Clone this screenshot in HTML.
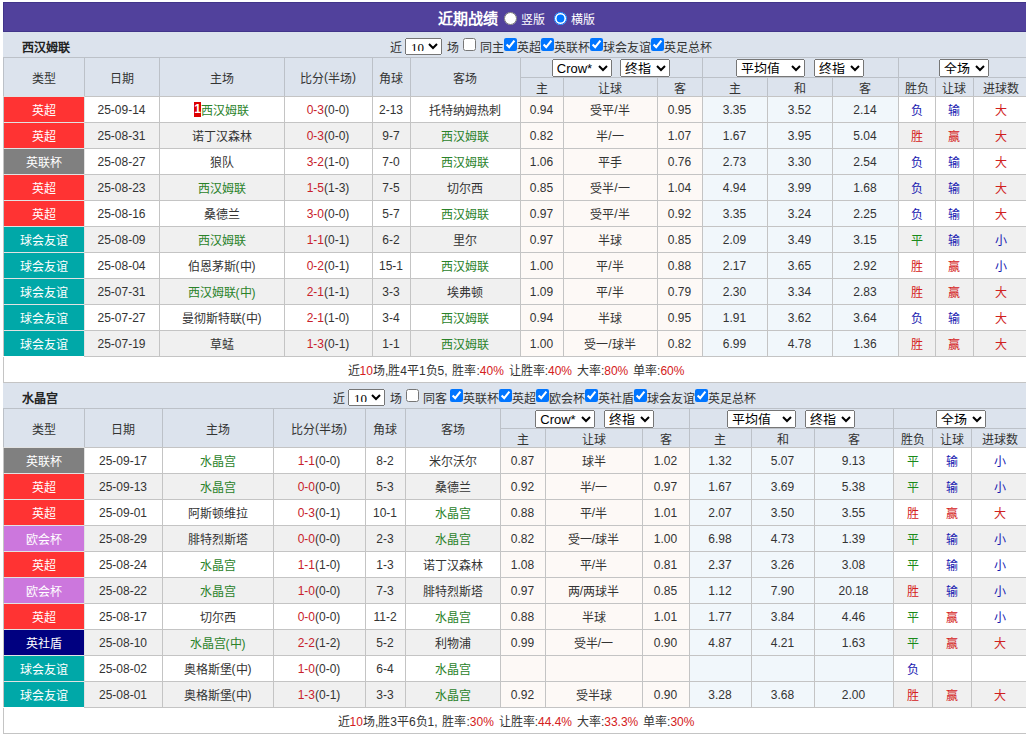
<!DOCTYPE html>
<html lang="zh-CN"><head><meta charset="utf-8">
<style>
html,body{margin:0;padding:0;background:#fff;overflow:hidden;width:1026px;height:737px;}
body{font-family:"Liberation Sans",sans-serif;font-size:12px;color:#333;position:relative;}
.c,.bar,.tname,.ttl,.flt{position:absolute;box-sizing:border-box;}
.c{border-left:1px solid #c4c4c4;border-top:1px solid #c4c4c4;display:flex;align-items:center;justify-content:center;white-space:nowrap;padding:0 1px 0 0;}
.hd{color:#333;border-color:#bcc1c8;}
i{font-style:normal;position:relative;top:0px;}
.tname{font-weight:bold;color:#222;font-size:12px;line-height:14px;}
.g{color:#2a822a;}
.sc{color:#c8202a;}
.r{color:#d42020;}
.sum>span{word-spacing:1.5px;}
.rk{background:#dd0000;color:#fff;font-weight:bold;display:inline-block;width:7px;height:15px;line-height:15px;text-align:center;font-size:12px;}
.flt{white-space:nowrap;color:#333;line-height:20px;height:20px;}
.flt select{font-family:"Liberation Serif",serif;font-size:13px;height:17px;width:37px;margin:0 5px 0 3.5px;vertical-align:top;padding:0 0 3px 1px;}
.flt input{vertical-align:top;margin:0;width:13px;height:13px;}
.flt input.uc{margin:0 4px 0 3.5px;} .flt input.sp{margin-left:3.5px;}
.gs select{font-family:"Liberation Sans",sans-serif;font-size:13px;height:18px;vertical-align:top;padding-bottom:2px;}
.s1{width:60px;margin-right:8.5px;} .s2{width:50px;} .s3{width:69px;margin-right:8.5px;} .s4{width:50px;}
.tt{position:absolute;font-weight:bold;font-size:15px;line-height:17px;color:#fff;}
.tv{position:absolute;color:#fff;font-size:12px;line-height:14px;}
body>input{position:absolute;margin:0;width:13px;height:13px;}
.ttl{left:3px;top:2px;width:1026px;height:30px;background:#51419c;border:1px solid #41358a;border-right:0;}
</style></head><body>
<div class="ttl"></div><span class="tt" style="left:438px;top:10px">近期战绩</span><input type="radio" name="v" style="left:504px;top:12px"><span class="tv" style="left:521px;top:13px">竖版</span><input type="radio" name="v" checked style="left:554px;top:12px"><span class="tv" style="left:571px;top:13px">横版</span>
<div class="bar" style="left:3px;top:32px;width:1026px;height:25px;background:#dce3ed;"></div>
<div class="tname" style="left:22px;top:41px">西汉姆联</div>
<div class="flt" style="left:389.5px;top:38px">近<select><option>10</option></select>场<input type="checkbox" class="uc">同主<input type="checkbox" checked>英超<input type="checkbox" checked>英联杯<input type="checkbox" checked>球会友谊<input type="checkbox" checked>英足总杯</div>
<div class="c hd" style="left:3px;top:57px;width:81px;height:39px;background:#dce3ed;"><i>类型</i></div>
<div class="c hd" style="left:84px;top:57px;width:75px;height:39px;background:#dce3ed;"><i>日期</i></div>
<div class="c hd" style="left:159px;top:57px;width:125px;height:39px;background:#dce3ed;"><i>主场</i></div>
<div class="c hd" style="left:284px;top:57px;width:88px;height:39px;background:#dce3ed;"><i>比分</i>(<i>半场</i>)</div>
<div class="c hd" style="left:372px;top:57px;width:38px;height:39px;background:#dce3ed;"><i>角球</i></div>
<div class="c hd" style="left:410px;top:57px;width:110px;height:39px;background:#dce3ed;"><i>客场</i></div>
<div class="c hd gs" style="left:520px;top:57px;width:182px;height:20px;background:#dce3ed;"><span><select class="s1"><option>Crow*</option></select><select class="s2"><option>终指</option></select></span></div>
<div class="c hd gs" style="left:702px;top:57px;width:196px;height:20px;background:#dce3ed;"><span><select class="s3"><option>平均值</option></select><select class="s2"><option>终指</option></select></span></div>
<div class="c hd gs" style="left:898px;top:57px;width:131px;height:20px;background:#dce3ed;"><span><select class="s4"><option>全场</option></select></span></div>
<div class="c hd sub" style="left:520px;top:77px;width:43px;height:19px;background:#dce3ed;"><i>主</i></div>
<div class="c hd sub" style="left:563px;top:77px;width:94px;height:19px;background:#dce3ed;"><i>让球</i></div>
<div class="c hd sub" style="left:657px;top:77px;width:45px;height:19px;background:#dce3ed;"><i>客</i></div>
<div class="c hd sub" style="left:702px;top:77px;width:65px;height:19px;background:#dce3ed;"><i>主</i></div>
<div class="c hd sub" style="left:767px;top:77px;width:65px;height:19px;background:#dce3ed;"><i>和</i></div>
<div class="c hd sub" style="left:832px;top:77px;width:66px;height:19px;background:#dce3ed;"><i>客</i></div>
<div class="c hd sub" style="left:898px;top:77px;width:37px;height:19px;background:#dce3ed;"><i>胜负</i></div>
<div class="c hd sub" style="left:935px;top:77px;width:38px;height:19px;background:#dce3ed;"><i>让球</i></div>
<div class="c hd sub" style="left:973px;top:77px;width:56px;height:19px;background:#dce3ed;"><i>进球数</i></div>
<div class="c" style="left:3px;top:96px;width:81px;height:26px;background:#ff3333;color:#fff;border-top-color:#e2e2e2;"><i>英超</i></div>
<div class="c" style="left:84px;top:96px;width:75px;height:26px;background:#ffffff;border-left-color:#e2e2e2;">25-09-14</div>
<div class="c" style="left:159px;top:96px;width:125px;height:26px;background:#ffffff;"><span class="rk">1</span><span class="g"><i>西汉姆联</i></span></div>
<div class="c" style="left:284px;top:96px;width:88px;height:26px;background:#ffffff;"><span class="sc">0-3</span>(0-0)</div>
<div class="c" style="left:372px;top:96px;width:38px;height:26px;background:#ffffff;">2-13</div>
<div class="c" style="left:410px;top:96px;width:110px;height:26px;background:#ffffff;"><i>托特纳姆热刺</i></div>
<div class="c" style="left:520px;top:96px;width:43px;height:26px;background:#fdf9f6;">0.94</div>
<div class="c" style="left:563px;top:96px;width:94px;height:26px;background:#fdf9f6;"><i>受平</i>/<i>半</i></div>
<div class="c" style="left:657px;top:96px;width:45px;height:26px;background:#fdf9f6;">0.95</div>
<div class="c" style="left:702px;top:96px;width:65px;height:26px;background:#f1f7fb;">3.35</div>
<div class="c" style="left:767px;top:96px;width:65px;height:26px;background:#f1f7fb;">3.52</div>
<div class="c" style="left:832px;top:96px;width:66px;height:26px;background:#f1f7fb;">2.14</div>
<div class="c" style="left:898px;top:96px;width:37px;height:26px;background:#ffffff;"><span style="color:#1818b0"><i>负</i></span></div>
<div class="c" style="left:935px;top:96px;width:38px;height:26px;background:#ffffff;"><span style="color:#1818b0"><i>输</i></span></div>
<div class="c" style="left:973px;top:96px;width:56px;height:26px;background:#ffffff;"><span style="color:#d02020"><i>大</i></span></div>
<div class="c" style="left:3px;top:122px;width:81px;height:26px;background:#ff3333;color:#fff;border-top-color:#e2e2e2;"><i>英超</i></div>
<div class="c" style="left:84px;top:122px;width:75px;height:26px;background:#f0f0f0;border-left-color:#e2e2e2;">25-08-31</div>
<div class="c" style="left:159px;top:122px;width:125px;height:26px;background:#f0f0f0;"><i>诺丁汉森林</i></div>
<div class="c" style="left:284px;top:122px;width:88px;height:26px;background:#f0f0f0;"><span class="sc">0-3</span>(0-0)</div>
<div class="c" style="left:372px;top:122px;width:38px;height:26px;background:#f0f0f0;">9-7</div>
<div class="c" style="left:410px;top:122px;width:110px;height:26px;background:#f0f0f0;"><span class="g"><i>西汉姆联</i></span></div>
<div class="c" style="left:520px;top:122px;width:43px;height:26px;background:#fdf9f6;">0.82</div>
<div class="c" style="left:563px;top:122px;width:94px;height:26px;background:#fdf9f6;"><i>半</i>/<i>一</i></div>
<div class="c" style="left:657px;top:122px;width:45px;height:26px;background:#fdf9f6;">1.07</div>
<div class="c" style="left:702px;top:122px;width:65px;height:26px;background:#f1f7fb;">1.67</div>
<div class="c" style="left:767px;top:122px;width:65px;height:26px;background:#f1f7fb;">3.95</div>
<div class="c" style="left:832px;top:122px;width:66px;height:26px;background:#f1f7fb;">5.04</div>
<div class="c" style="left:898px;top:122px;width:37px;height:26px;background:#f0f0f0;"><span style="color:#d42020"><i>胜</i></span></div>
<div class="c" style="left:935px;top:122px;width:38px;height:26px;background:#f0f0f0;"><span style="color:#d42020"><i>赢</i></span></div>
<div class="c" style="left:973px;top:122px;width:56px;height:26px;background:#f0f0f0;"><span style="color:#d02020"><i>大</i></span></div>
<div class="c" style="left:3px;top:148px;width:81px;height:26px;background:#808080;color:#fff;border-top-color:#e2e2e2;"><i>英联杯</i></div>
<div class="c" style="left:84px;top:148px;width:75px;height:26px;background:#ffffff;border-left-color:#e2e2e2;">25-08-27</div>
<div class="c" style="left:159px;top:148px;width:125px;height:26px;background:#ffffff;"><i>狼队</i></div>
<div class="c" style="left:284px;top:148px;width:88px;height:26px;background:#ffffff;"><span class="sc">3-2</span>(1-0)</div>
<div class="c" style="left:372px;top:148px;width:38px;height:26px;background:#ffffff;">7-0</div>
<div class="c" style="left:410px;top:148px;width:110px;height:26px;background:#ffffff;"><span class="g"><i>西汉姆联</i></span></div>
<div class="c" style="left:520px;top:148px;width:43px;height:26px;background:#fdf9f6;">1.06</div>
<div class="c" style="left:563px;top:148px;width:94px;height:26px;background:#fdf9f6;"><i>平手</i></div>
<div class="c" style="left:657px;top:148px;width:45px;height:26px;background:#fdf9f6;">0.76</div>
<div class="c" style="left:702px;top:148px;width:65px;height:26px;background:#f1f7fb;">2.73</div>
<div class="c" style="left:767px;top:148px;width:65px;height:26px;background:#f1f7fb;">3.30</div>
<div class="c" style="left:832px;top:148px;width:66px;height:26px;background:#f1f7fb;">2.54</div>
<div class="c" style="left:898px;top:148px;width:37px;height:26px;background:#ffffff;"><span style="color:#1818b0"><i>负</i></span></div>
<div class="c" style="left:935px;top:148px;width:38px;height:26px;background:#ffffff;"><span style="color:#1818b0"><i>输</i></span></div>
<div class="c" style="left:973px;top:148px;width:56px;height:26px;background:#ffffff;"><span style="color:#d02020"><i>大</i></span></div>
<div class="c" style="left:3px;top:174px;width:81px;height:26px;background:#ff3333;color:#fff;border-top-color:#e2e2e2;"><i>英超</i></div>
<div class="c" style="left:84px;top:174px;width:75px;height:26px;background:#f0f0f0;border-left-color:#e2e2e2;">25-08-23</div>
<div class="c" style="left:159px;top:174px;width:125px;height:26px;background:#f0f0f0;"><span class="g"><i>西汉姆联</i></span></div>
<div class="c" style="left:284px;top:174px;width:88px;height:26px;background:#f0f0f0;"><span class="sc">1-5</span>(1-3)</div>
<div class="c" style="left:372px;top:174px;width:38px;height:26px;background:#f0f0f0;">7-5</div>
<div class="c" style="left:410px;top:174px;width:110px;height:26px;background:#f0f0f0;"><i>切尔西</i></div>
<div class="c" style="left:520px;top:174px;width:43px;height:26px;background:#fdf9f6;">0.85</div>
<div class="c" style="left:563px;top:174px;width:94px;height:26px;background:#fdf9f6;"><i>受半</i>/<i>一</i></div>
<div class="c" style="left:657px;top:174px;width:45px;height:26px;background:#fdf9f6;">1.04</div>
<div class="c" style="left:702px;top:174px;width:65px;height:26px;background:#f1f7fb;">4.94</div>
<div class="c" style="left:767px;top:174px;width:65px;height:26px;background:#f1f7fb;">3.99</div>
<div class="c" style="left:832px;top:174px;width:66px;height:26px;background:#f1f7fb;">1.68</div>
<div class="c" style="left:898px;top:174px;width:37px;height:26px;background:#f0f0f0;"><span style="color:#1818b0"><i>负</i></span></div>
<div class="c" style="left:935px;top:174px;width:38px;height:26px;background:#f0f0f0;"><span style="color:#1818b0"><i>输</i></span></div>
<div class="c" style="left:973px;top:174px;width:56px;height:26px;background:#f0f0f0;"><span style="color:#d02020"><i>大</i></span></div>
<div class="c" style="left:3px;top:200px;width:81px;height:26px;background:#ff3333;color:#fff;border-top-color:#e2e2e2;"><i>英超</i></div>
<div class="c" style="left:84px;top:200px;width:75px;height:26px;background:#ffffff;border-left-color:#e2e2e2;">25-08-16</div>
<div class="c" style="left:159px;top:200px;width:125px;height:26px;background:#ffffff;"><i>桑德兰</i></div>
<div class="c" style="left:284px;top:200px;width:88px;height:26px;background:#ffffff;"><span class="sc">3-0</span>(0-0)</div>
<div class="c" style="left:372px;top:200px;width:38px;height:26px;background:#ffffff;">5-7</div>
<div class="c" style="left:410px;top:200px;width:110px;height:26px;background:#ffffff;"><span class="g"><i>西汉姆联</i></span></div>
<div class="c" style="left:520px;top:200px;width:43px;height:26px;background:#fdf9f6;">0.97</div>
<div class="c" style="left:563px;top:200px;width:94px;height:26px;background:#fdf9f6;"><i>受平</i>/<i>半</i></div>
<div class="c" style="left:657px;top:200px;width:45px;height:26px;background:#fdf9f6;">0.92</div>
<div class="c" style="left:702px;top:200px;width:65px;height:26px;background:#f1f7fb;">3.35</div>
<div class="c" style="left:767px;top:200px;width:65px;height:26px;background:#f1f7fb;">3.24</div>
<div class="c" style="left:832px;top:200px;width:66px;height:26px;background:#f1f7fb;">2.25</div>
<div class="c" style="left:898px;top:200px;width:37px;height:26px;background:#ffffff;"><span style="color:#1818b0"><i>负</i></span></div>
<div class="c" style="left:935px;top:200px;width:38px;height:26px;background:#ffffff;"><span style="color:#1818b0"><i>输</i></span></div>
<div class="c" style="left:973px;top:200px;width:56px;height:26px;background:#ffffff;"><span style="color:#d02020"><i>大</i></span></div>
<div class="c" style="left:3px;top:226px;width:81px;height:26px;background:#00a8a8;color:#fff;border-top-color:#e2e2e2;"><i>球会友谊</i></div>
<div class="c" style="left:84px;top:226px;width:75px;height:26px;background:#f0f0f0;border-left-color:#e2e2e2;">25-08-09</div>
<div class="c" style="left:159px;top:226px;width:125px;height:26px;background:#f0f0f0;"><span class="g"><i>西汉姆联</i></span></div>
<div class="c" style="left:284px;top:226px;width:88px;height:26px;background:#f0f0f0;"><span class="sc">1-1</span>(0-1)</div>
<div class="c" style="left:372px;top:226px;width:38px;height:26px;background:#f0f0f0;">6-2</div>
<div class="c" style="left:410px;top:226px;width:110px;height:26px;background:#f0f0f0;"><i>里尔</i></div>
<div class="c" style="left:520px;top:226px;width:43px;height:26px;background:#fdf9f6;">0.97</div>
<div class="c" style="left:563px;top:226px;width:94px;height:26px;background:#fdf9f6;"><i>半球</i></div>
<div class="c" style="left:657px;top:226px;width:45px;height:26px;background:#fdf9f6;">0.85</div>
<div class="c" style="left:702px;top:226px;width:65px;height:26px;background:#f1f7fb;">2.09</div>
<div class="c" style="left:767px;top:226px;width:65px;height:26px;background:#f1f7fb;">3.49</div>
<div class="c" style="left:832px;top:226px;width:66px;height:26px;background:#f1f7fb;">3.15</div>
<div class="c" style="left:898px;top:226px;width:37px;height:26px;background:#f0f0f0;"><span style="color:#1a8a1a"><i>平</i></span></div>
<div class="c" style="left:935px;top:226px;width:38px;height:26px;background:#f0f0f0;"><span style="color:#1818b0"><i>输</i></span></div>
<div class="c" style="left:973px;top:226px;width:56px;height:26px;background:#f0f0f0;"><span style="color:#1818b0"><i>小</i></span></div>
<div class="c" style="left:3px;top:252px;width:81px;height:26px;background:#00a8a8;color:#fff;border-top-color:#e2e2e2;"><i>球会友谊</i></div>
<div class="c" style="left:84px;top:252px;width:75px;height:26px;background:#ffffff;border-left-color:#e2e2e2;">25-08-04</div>
<div class="c" style="left:159px;top:252px;width:125px;height:26px;background:#ffffff;"><i>伯恩茅斯</i>(<i>中</i>)</div>
<div class="c" style="left:284px;top:252px;width:88px;height:26px;background:#ffffff;"><span class="sc">0-2</span>(0-1)</div>
<div class="c" style="left:372px;top:252px;width:38px;height:26px;background:#ffffff;">15-1</div>
<div class="c" style="left:410px;top:252px;width:110px;height:26px;background:#ffffff;"><span class="g"><i>西汉姆联</i></span></div>
<div class="c" style="left:520px;top:252px;width:43px;height:26px;background:#fdf9f6;">1.00</div>
<div class="c" style="left:563px;top:252px;width:94px;height:26px;background:#fdf9f6;"><i>平</i>/<i>半</i></div>
<div class="c" style="left:657px;top:252px;width:45px;height:26px;background:#fdf9f6;">0.88</div>
<div class="c" style="left:702px;top:252px;width:65px;height:26px;background:#f1f7fb;">2.17</div>
<div class="c" style="left:767px;top:252px;width:65px;height:26px;background:#f1f7fb;">3.65</div>
<div class="c" style="left:832px;top:252px;width:66px;height:26px;background:#f1f7fb;">2.92</div>
<div class="c" style="left:898px;top:252px;width:37px;height:26px;background:#ffffff;"><span style="color:#d42020"><i>胜</i></span></div>
<div class="c" style="left:935px;top:252px;width:38px;height:26px;background:#ffffff;"><span style="color:#d42020"><i>赢</i></span></div>
<div class="c" style="left:973px;top:252px;width:56px;height:26px;background:#ffffff;"><span style="color:#1818b0"><i>小</i></span></div>
<div class="c" style="left:3px;top:278px;width:81px;height:26px;background:#00a8a8;color:#fff;border-top-color:#e2e2e2;"><i>球会友谊</i></div>
<div class="c" style="left:84px;top:278px;width:75px;height:26px;background:#f0f0f0;border-left-color:#e2e2e2;">25-07-31</div>
<div class="c" style="left:159px;top:278px;width:125px;height:26px;background:#f0f0f0;"><span class="g"><i>西汉姆联</i>(<i>中</i>)</span></div>
<div class="c" style="left:284px;top:278px;width:88px;height:26px;background:#f0f0f0;"><span class="sc">2-1</span>(1-1)</div>
<div class="c" style="left:372px;top:278px;width:38px;height:26px;background:#f0f0f0;">3-3</div>
<div class="c" style="left:410px;top:278px;width:110px;height:26px;background:#f0f0f0;"><i>埃弗顿</i></div>
<div class="c" style="left:520px;top:278px;width:43px;height:26px;background:#fdf9f6;">1.09</div>
<div class="c" style="left:563px;top:278px;width:94px;height:26px;background:#fdf9f6;"><i>平</i>/<i>半</i></div>
<div class="c" style="left:657px;top:278px;width:45px;height:26px;background:#fdf9f6;">0.79</div>
<div class="c" style="left:702px;top:278px;width:65px;height:26px;background:#f1f7fb;">2.30</div>
<div class="c" style="left:767px;top:278px;width:65px;height:26px;background:#f1f7fb;">3.34</div>
<div class="c" style="left:832px;top:278px;width:66px;height:26px;background:#f1f7fb;">2.83</div>
<div class="c" style="left:898px;top:278px;width:37px;height:26px;background:#f0f0f0;"><span style="color:#d42020"><i>胜</i></span></div>
<div class="c" style="left:935px;top:278px;width:38px;height:26px;background:#f0f0f0;"><span style="color:#d42020"><i>赢</i></span></div>
<div class="c" style="left:973px;top:278px;width:56px;height:26px;background:#f0f0f0;"><span style="color:#d02020"><i>大</i></span></div>
<div class="c" style="left:3px;top:304px;width:81px;height:26px;background:#00a8a8;color:#fff;border-top-color:#e2e2e2;"><i>球会友谊</i></div>
<div class="c" style="left:84px;top:304px;width:75px;height:26px;background:#ffffff;border-left-color:#e2e2e2;">25-07-27</div>
<div class="c" style="left:159px;top:304px;width:125px;height:26px;background:#ffffff;"><i>曼彻斯特联</i>(<i>中</i>)</div>
<div class="c" style="left:284px;top:304px;width:88px;height:26px;background:#ffffff;"><span class="sc">2-1</span>(1-0)</div>
<div class="c" style="left:372px;top:304px;width:38px;height:26px;background:#ffffff;">3-4</div>
<div class="c" style="left:410px;top:304px;width:110px;height:26px;background:#ffffff;"><span class="g"><i>西汉姆联</i></span></div>
<div class="c" style="left:520px;top:304px;width:43px;height:26px;background:#fdf9f6;">0.94</div>
<div class="c" style="left:563px;top:304px;width:94px;height:26px;background:#fdf9f6;"><i>半球</i></div>
<div class="c" style="left:657px;top:304px;width:45px;height:26px;background:#fdf9f6;">0.95</div>
<div class="c" style="left:702px;top:304px;width:65px;height:26px;background:#f1f7fb;">1.91</div>
<div class="c" style="left:767px;top:304px;width:65px;height:26px;background:#f1f7fb;">3.62</div>
<div class="c" style="left:832px;top:304px;width:66px;height:26px;background:#f1f7fb;">3.64</div>
<div class="c" style="left:898px;top:304px;width:37px;height:26px;background:#ffffff;"><span style="color:#1818b0"><i>负</i></span></div>
<div class="c" style="left:935px;top:304px;width:38px;height:26px;background:#ffffff;"><span style="color:#1818b0"><i>输</i></span></div>
<div class="c" style="left:973px;top:304px;width:56px;height:26px;background:#ffffff;"><span style="color:#d02020"><i>大</i></span></div>
<div class="c" style="left:3px;top:330px;width:81px;height:26px;background:#00a8a8;color:#fff;border-top-color:#e2e2e2;"><i>球会友谊</i></div>
<div class="c" style="left:84px;top:330px;width:75px;height:26px;background:#f0f0f0;border-left-color:#e2e2e2;">25-07-19</div>
<div class="c" style="left:159px;top:330px;width:125px;height:26px;background:#f0f0f0;"><i>草蜢</i></div>
<div class="c" style="left:284px;top:330px;width:88px;height:26px;background:#f0f0f0;"><span class="sc">1-3</span>(0-1)</div>
<div class="c" style="left:372px;top:330px;width:38px;height:26px;background:#f0f0f0;">1-1</div>
<div class="c" style="left:410px;top:330px;width:110px;height:26px;background:#f0f0f0;"><span class="g"><i>西汉姆联</i></span></div>
<div class="c" style="left:520px;top:330px;width:43px;height:26px;background:#fdf9f6;">1.00</div>
<div class="c" style="left:563px;top:330px;width:94px;height:26px;background:#fdf9f6;"><i>受一</i>/<i>球半</i></div>
<div class="c" style="left:657px;top:330px;width:45px;height:26px;background:#fdf9f6;">0.82</div>
<div class="c" style="left:702px;top:330px;width:65px;height:26px;background:#f1f7fb;">6.99</div>
<div class="c" style="left:767px;top:330px;width:65px;height:26px;background:#f1f7fb;">4.78</div>
<div class="c" style="left:832px;top:330px;width:66px;height:26px;background:#f1f7fb;">1.36</div>
<div class="c" style="left:898px;top:330px;width:37px;height:26px;background:#f0f0f0;"><span style="color:#d42020"><i>胜</i></span></div>
<div class="c" style="left:935px;top:330px;width:38px;height:26px;background:#f0f0f0;"><span style="color:#d42020"><i>赢</i></span></div>
<div class="c" style="left:973px;top:330px;width:56px;height:26px;background:#f0f0f0;"><span style="color:#d02020"><i>大</i></span></div>
<div class="c sum" style="left:3px;top:357px;width:1026px;height:25px;background:#fff;border-top:0;"><span><i>近</i><span class="r">10</span><i>场</i>,<i>胜</i>4<i>平</i>1<i>负</i>5, <i>胜率</i>:<span class="r">40%</span> <i>让胜率</i>:<span class="r">40%</span> <i>大率</i>:<span class="r">80%</span> <i>单率</i>:<span class="r">60%</span></span></div>
<div class="bar" style="left:84px;top:356px;width:945px;height:1px;background:#c4c4c4"></div>
<div class="bar" style="left:3px;top:382px;width:1026px;height:26px;background:#dce3ed;border-top:1px solid #c4c4c4;"></div>
<div class="tname" style="left:22px;top:392px">水晶宫</div>
<div class="flt" style="left:332.5px;top:389px">近<select><option>10</option></select>场<input type="checkbox" class="uc">同客<input class="sp"  type="checkbox" checked>英联杯<input type="checkbox" checked>英超<input type="checkbox" checked>欧会杯<input type="checkbox" checked>英社盾<input type="checkbox" checked>球会友谊<input type="checkbox" checked>英足总杯</div>
<div class="c hd" style="left:3px;top:408px;width:81px;height:39px;background:#dce3ed;"><i>类型</i></div>
<div class="c hd" style="left:84px;top:408px;width:78px;height:39px;background:#dce3ed;"><i>日期</i></div>
<div class="c hd" style="left:162px;top:408px;width:111px;height:39px;background:#dce3ed;"><i>主场</i></div>
<div class="c hd" style="left:273px;top:408px;width:92px;height:39px;background:#dce3ed;"><i>比分</i>(<i>半场</i>)</div>
<div class="c hd" style="left:365px;top:408px;width:40px;height:39px;background:#dce3ed;"><i>角球</i></div>
<div class="c hd" style="left:405px;top:408px;width:95px;height:39px;background:#dce3ed;"><i>客场</i></div>
<div class="c hd gs" style="left:500px;top:408px;width:189px;height:20px;background:#dce3ed;"><span><select class="s1"><option>Crow*</option></select><select class="s2"><option>终指</option></select></span></div>
<div class="c hd gs" style="left:689px;top:408px;width:204px;height:20px;background:#dce3ed;"><span><select class="s3"><option>平均值</option></select><select class="s2"><option>终指</option></select></span></div>
<div class="c hd gs" style="left:893px;top:408px;width:136px;height:20px;background:#dce3ed;"><span><select class="s4"><option>全场</option></select></span></div>
<div class="c hd sub" style="left:500px;top:428px;width:45px;height:19px;background:#dce3ed;"><i>主</i></div>
<div class="c hd sub" style="left:545px;top:428px;width:97px;height:19px;background:#dce3ed;"><i>让球</i></div>
<div class="c hd sub" style="left:642px;top:428px;width:47px;height:19px;background:#dce3ed;"><i>客</i></div>
<div class="c hd sub" style="left:689px;top:428px;width:62px;height:19px;background:#dce3ed;"><i>主</i></div>
<div class="c hd sub" style="left:751px;top:428px;width:63px;height:19px;background:#dce3ed;"><i>和</i></div>
<div class="c hd sub" style="left:814px;top:428px;width:79px;height:19px;background:#dce3ed;"><i>客</i></div>
<div class="c hd sub" style="left:893px;top:428px;width:39px;height:19px;background:#dce3ed;"><i>胜负</i></div>
<div class="c hd sub" style="left:932px;top:428px;width:39px;height:19px;background:#dce3ed;"><i>让球</i></div>
<div class="c hd sub" style="left:971px;top:428px;width:58px;height:19px;background:#dce3ed;"><i>进球数</i></div>
<div class="c" style="left:3px;top:447px;width:81px;height:26px;background:#808080;color:#fff;border-top-color:#e2e2e2;"><i>英联杯</i></div>
<div class="c" style="left:84px;top:447px;width:78px;height:26px;background:#ffffff;border-left-color:#e2e2e2;">25-09-17</div>
<div class="c" style="left:162px;top:447px;width:111px;height:26px;background:#ffffff;"><span class="g"><i>水晶宫</i></span></div>
<div class="c" style="left:273px;top:447px;width:92px;height:26px;background:#ffffff;"><span class="sc">1-1</span>(0-0)</div>
<div class="c" style="left:365px;top:447px;width:40px;height:26px;background:#ffffff;">8-2</div>
<div class="c" style="left:405px;top:447px;width:95px;height:26px;background:#ffffff;"><i>米尔沃尔</i></div>
<div class="c" style="left:500px;top:447px;width:45px;height:26px;background:#fdf9f6;">0.87</div>
<div class="c" style="left:545px;top:447px;width:97px;height:26px;background:#fdf9f6;"><i>球半</i></div>
<div class="c" style="left:642px;top:447px;width:47px;height:26px;background:#fdf9f6;">1.02</div>
<div class="c" style="left:689px;top:447px;width:62px;height:26px;background:#f1f7fb;">1.32</div>
<div class="c" style="left:751px;top:447px;width:63px;height:26px;background:#f1f7fb;">5.07</div>
<div class="c" style="left:814px;top:447px;width:79px;height:26px;background:#f1f7fb;">9.13</div>
<div class="c" style="left:893px;top:447px;width:39px;height:26px;background:#ffffff;"><span style="color:#1a8a1a"><i>平</i></span></div>
<div class="c" style="left:932px;top:447px;width:39px;height:26px;background:#ffffff;"><span style="color:#1818b0"><i>输</i></span></div>
<div class="c" style="left:971px;top:447px;width:58px;height:26px;background:#ffffff;"><span style="color:#1818b0"><i>小</i></span></div>
<div class="c" style="left:3px;top:473px;width:81px;height:26px;background:#ff3333;color:#fff;border-top-color:#e2e2e2;"><i>英超</i></div>
<div class="c" style="left:84px;top:473px;width:78px;height:26px;background:#f0f0f0;border-left-color:#e2e2e2;">25-09-13</div>
<div class="c" style="left:162px;top:473px;width:111px;height:26px;background:#f0f0f0;"><span class="g"><i>水晶宫</i></span></div>
<div class="c" style="left:273px;top:473px;width:92px;height:26px;background:#f0f0f0;"><span class="sc">0-0</span>(0-0)</div>
<div class="c" style="left:365px;top:473px;width:40px;height:26px;background:#f0f0f0;">5-3</div>
<div class="c" style="left:405px;top:473px;width:95px;height:26px;background:#f0f0f0;"><i>桑德兰</i></div>
<div class="c" style="left:500px;top:473px;width:45px;height:26px;background:#fdf9f6;">0.92</div>
<div class="c" style="left:545px;top:473px;width:97px;height:26px;background:#fdf9f6;"><i>半</i>/<i>一</i></div>
<div class="c" style="left:642px;top:473px;width:47px;height:26px;background:#fdf9f6;">0.97</div>
<div class="c" style="left:689px;top:473px;width:62px;height:26px;background:#f1f7fb;">1.67</div>
<div class="c" style="left:751px;top:473px;width:63px;height:26px;background:#f1f7fb;">3.69</div>
<div class="c" style="left:814px;top:473px;width:79px;height:26px;background:#f1f7fb;">5.38</div>
<div class="c" style="left:893px;top:473px;width:39px;height:26px;background:#f0f0f0;"><span style="color:#1a8a1a"><i>平</i></span></div>
<div class="c" style="left:932px;top:473px;width:39px;height:26px;background:#f0f0f0;"><span style="color:#1818b0"><i>输</i></span></div>
<div class="c" style="left:971px;top:473px;width:58px;height:26px;background:#f0f0f0;"><span style="color:#1818b0"><i>小</i></span></div>
<div class="c" style="left:3px;top:499px;width:81px;height:26px;background:#ff3333;color:#fff;border-top-color:#e2e2e2;"><i>英超</i></div>
<div class="c" style="left:84px;top:499px;width:78px;height:26px;background:#ffffff;border-left-color:#e2e2e2;">25-09-01</div>
<div class="c" style="left:162px;top:499px;width:111px;height:26px;background:#ffffff;"><i>阿斯顿维拉</i></div>
<div class="c" style="left:273px;top:499px;width:92px;height:26px;background:#ffffff;"><span class="sc">0-3</span>(0-1)</div>
<div class="c" style="left:365px;top:499px;width:40px;height:26px;background:#ffffff;">10-1</div>
<div class="c" style="left:405px;top:499px;width:95px;height:26px;background:#ffffff;"><span class="g"><i>水晶宫</i></span></div>
<div class="c" style="left:500px;top:499px;width:45px;height:26px;background:#fdf9f6;">0.88</div>
<div class="c" style="left:545px;top:499px;width:97px;height:26px;background:#fdf9f6;"><i>平</i>/<i>半</i></div>
<div class="c" style="left:642px;top:499px;width:47px;height:26px;background:#fdf9f6;">1.01</div>
<div class="c" style="left:689px;top:499px;width:62px;height:26px;background:#f1f7fb;">2.07</div>
<div class="c" style="left:751px;top:499px;width:63px;height:26px;background:#f1f7fb;">3.50</div>
<div class="c" style="left:814px;top:499px;width:79px;height:26px;background:#f1f7fb;">3.55</div>
<div class="c" style="left:893px;top:499px;width:39px;height:26px;background:#ffffff;"><span style="color:#d42020"><i>胜</i></span></div>
<div class="c" style="left:932px;top:499px;width:39px;height:26px;background:#ffffff;"><span style="color:#d42020"><i>赢</i></span></div>
<div class="c" style="left:971px;top:499px;width:58px;height:26px;background:#ffffff;"><span style="color:#d02020"><i>大</i></span></div>
<div class="c" style="left:3px;top:525px;width:81px;height:26px;background:#cc77dd;color:#fff;border-top-color:#e2e2e2;"><i>欧会杯</i></div>
<div class="c" style="left:84px;top:525px;width:78px;height:26px;background:#f0f0f0;border-left-color:#e2e2e2;">25-08-29</div>
<div class="c" style="left:162px;top:525px;width:111px;height:26px;background:#f0f0f0;"><i>腓特烈斯塔</i></div>
<div class="c" style="left:273px;top:525px;width:92px;height:26px;background:#f0f0f0;"><span class="sc">0-0</span>(0-0)</div>
<div class="c" style="left:365px;top:525px;width:40px;height:26px;background:#f0f0f0;">2-3</div>
<div class="c" style="left:405px;top:525px;width:95px;height:26px;background:#f0f0f0;"><span class="g"><i>水晶宫</i></span></div>
<div class="c" style="left:500px;top:525px;width:45px;height:26px;background:#fdf9f6;">0.82</div>
<div class="c" style="left:545px;top:525px;width:97px;height:26px;background:#fdf9f6;"><i>受一</i>/<i>球半</i></div>
<div class="c" style="left:642px;top:525px;width:47px;height:26px;background:#fdf9f6;">1.00</div>
<div class="c" style="left:689px;top:525px;width:62px;height:26px;background:#f1f7fb;">6.98</div>
<div class="c" style="left:751px;top:525px;width:63px;height:26px;background:#f1f7fb;">4.73</div>
<div class="c" style="left:814px;top:525px;width:79px;height:26px;background:#f1f7fb;">1.39</div>
<div class="c" style="left:893px;top:525px;width:39px;height:26px;background:#f0f0f0;"><span style="color:#1a8a1a"><i>平</i></span></div>
<div class="c" style="left:932px;top:525px;width:39px;height:26px;background:#f0f0f0;"><span style="color:#1818b0"><i>输</i></span></div>
<div class="c" style="left:971px;top:525px;width:58px;height:26px;background:#f0f0f0;"><span style="color:#1818b0"><i>小</i></span></div>
<div class="c" style="left:3px;top:551px;width:81px;height:26px;background:#ff3333;color:#fff;border-top-color:#e2e2e2;"><i>英超</i></div>
<div class="c" style="left:84px;top:551px;width:78px;height:26px;background:#ffffff;border-left-color:#e2e2e2;">25-08-24</div>
<div class="c" style="left:162px;top:551px;width:111px;height:26px;background:#ffffff;"><span class="g"><i>水晶宫</i></span></div>
<div class="c" style="left:273px;top:551px;width:92px;height:26px;background:#ffffff;"><span class="sc">1-1</span>(1-0)</div>
<div class="c" style="left:365px;top:551px;width:40px;height:26px;background:#ffffff;">1-3</div>
<div class="c" style="left:405px;top:551px;width:95px;height:26px;background:#ffffff;"><i>诺丁汉森林</i></div>
<div class="c" style="left:500px;top:551px;width:45px;height:26px;background:#fdf9f6;">1.08</div>
<div class="c" style="left:545px;top:551px;width:97px;height:26px;background:#fdf9f6;"><i>平</i>/<i>半</i></div>
<div class="c" style="left:642px;top:551px;width:47px;height:26px;background:#fdf9f6;">0.81</div>
<div class="c" style="left:689px;top:551px;width:62px;height:26px;background:#f1f7fb;">2.37</div>
<div class="c" style="left:751px;top:551px;width:63px;height:26px;background:#f1f7fb;">3.26</div>
<div class="c" style="left:814px;top:551px;width:79px;height:26px;background:#f1f7fb;">3.08</div>
<div class="c" style="left:893px;top:551px;width:39px;height:26px;background:#ffffff;"><span style="color:#1a8a1a"><i>平</i></span></div>
<div class="c" style="left:932px;top:551px;width:39px;height:26px;background:#ffffff;"><span style="color:#1818b0"><i>输</i></span></div>
<div class="c" style="left:971px;top:551px;width:58px;height:26px;background:#ffffff;"><span style="color:#1818b0"><i>小</i></span></div>
<div class="c" style="left:3px;top:577px;width:81px;height:26px;background:#cc77dd;color:#fff;border-top-color:#e2e2e2;"><i>欧会杯</i></div>
<div class="c" style="left:84px;top:577px;width:78px;height:26px;background:#f0f0f0;border-left-color:#e2e2e2;">25-08-22</div>
<div class="c" style="left:162px;top:577px;width:111px;height:26px;background:#f0f0f0;"><span class="g"><i>水晶宫</i></span></div>
<div class="c" style="left:273px;top:577px;width:92px;height:26px;background:#f0f0f0;"><span class="sc">1-0</span>(0-0)</div>
<div class="c" style="left:365px;top:577px;width:40px;height:26px;background:#f0f0f0;">7-3</div>
<div class="c" style="left:405px;top:577px;width:95px;height:26px;background:#f0f0f0;"><i>腓特烈斯塔</i></div>
<div class="c" style="left:500px;top:577px;width:45px;height:26px;background:#fdf9f6;">0.97</div>
<div class="c" style="left:545px;top:577px;width:97px;height:26px;background:#fdf9f6;"><i>两</i>/<i>两球半</i></div>
<div class="c" style="left:642px;top:577px;width:47px;height:26px;background:#fdf9f6;">0.85</div>
<div class="c" style="left:689px;top:577px;width:62px;height:26px;background:#f1f7fb;">1.12</div>
<div class="c" style="left:751px;top:577px;width:63px;height:26px;background:#f1f7fb;">7.90</div>
<div class="c" style="left:814px;top:577px;width:79px;height:26px;background:#f1f7fb;">20.18</div>
<div class="c" style="left:893px;top:577px;width:39px;height:26px;background:#f0f0f0;"><span style="color:#d42020"><i>胜</i></span></div>
<div class="c" style="left:932px;top:577px;width:39px;height:26px;background:#f0f0f0;"><span style="color:#1818b0"><i>输</i></span></div>
<div class="c" style="left:971px;top:577px;width:58px;height:26px;background:#f0f0f0;"><span style="color:#1818b0"><i>小</i></span></div>
<div class="c" style="left:3px;top:603px;width:81px;height:26px;background:#ff3333;color:#fff;border-top-color:#e2e2e2;"><i>英超</i></div>
<div class="c" style="left:84px;top:603px;width:78px;height:26px;background:#ffffff;border-left-color:#e2e2e2;">25-08-17</div>
<div class="c" style="left:162px;top:603px;width:111px;height:26px;background:#ffffff;"><i>切尔西</i></div>
<div class="c" style="left:273px;top:603px;width:92px;height:26px;background:#ffffff;"><span class="sc">0-0</span>(0-0)</div>
<div class="c" style="left:365px;top:603px;width:40px;height:26px;background:#ffffff;">11-2</div>
<div class="c" style="left:405px;top:603px;width:95px;height:26px;background:#ffffff;"><span class="g"><i>水晶宫</i></span></div>
<div class="c" style="left:500px;top:603px;width:45px;height:26px;background:#fdf9f6;">0.88</div>
<div class="c" style="left:545px;top:603px;width:97px;height:26px;background:#fdf9f6;"><i>半球</i></div>
<div class="c" style="left:642px;top:603px;width:47px;height:26px;background:#fdf9f6;">1.01</div>
<div class="c" style="left:689px;top:603px;width:62px;height:26px;background:#f1f7fb;">1.77</div>
<div class="c" style="left:751px;top:603px;width:63px;height:26px;background:#f1f7fb;">3.84</div>
<div class="c" style="left:814px;top:603px;width:79px;height:26px;background:#f1f7fb;">4.46</div>
<div class="c" style="left:893px;top:603px;width:39px;height:26px;background:#ffffff;"><span style="color:#1a8a1a"><i>平</i></span></div>
<div class="c" style="left:932px;top:603px;width:39px;height:26px;background:#ffffff;"><span style="color:#d42020"><i>赢</i></span></div>
<div class="c" style="left:971px;top:603px;width:58px;height:26px;background:#ffffff;"><span style="color:#1818b0"><i>小</i></span></div>
<div class="c" style="left:3px;top:629px;width:81px;height:26px;background:#000080;color:#fff;border-top-color:#e2e2e2;"><i>英社盾</i></div>
<div class="c" style="left:84px;top:629px;width:78px;height:26px;background:#f0f0f0;border-left-color:#e2e2e2;">25-08-10</div>
<div class="c" style="left:162px;top:629px;width:111px;height:26px;background:#f0f0f0;"><span class="g"><i>水晶宫</i>(<i>中</i>)</span></div>
<div class="c" style="left:273px;top:629px;width:92px;height:26px;background:#f0f0f0;"><span class="sc">2-2</span>(1-2)</div>
<div class="c" style="left:365px;top:629px;width:40px;height:26px;background:#f0f0f0;">5-2</div>
<div class="c" style="left:405px;top:629px;width:95px;height:26px;background:#f0f0f0;"><i>利物浦</i></div>
<div class="c" style="left:500px;top:629px;width:45px;height:26px;background:#fdf9f6;">0.99</div>
<div class="c" style="left:545px;top:629px;width:97px;height:26px;background:#fdf9f6;"><i>受半</i>/<i>一</i></div>
<div class="c" style="left:642px;top:629px;width:47px;height:26px;background:#fdf9f6;">0.90</div>
<div class="c" style="left:689px;top:629px;width:62px;height:26px;background:#f1f7fb;">4.87</div>
<div class="c" style="left:751px;top:629px;width:63px;height:26px;background:#f1f7fb;">4.21</div>
<div class="c" style="left:814px;top:629px;width:79px;height:26px;background:#f1f7fb;">1.63</div>
<div class="c" style="left:893px;top:629px;width:39px;height:26px;background:#f0f0f0;"><span style="color:#1a8a1a"><i>平</i></span></div>
<div class="c" style="left:932px;top:629px;width:39px;height:26px;background:#f0f0f0;"><span style="color:#d42020"><i>赢</i></span></div>
<div class="c" style="left:971px;top:629px;width:58px;height:26px;background:#f0f0f0;"><span style="color:#d02020"><i>大</i></span></div>
<div class="c" style="left:3px;top:655px;width:81px;height:26px;background:#00a8a8;color:#fff;border-top-color:#e2e2e2;"><i>球会友谊</i></div>
<div class="c" style="left:84px;top:655px;width:78px;height:26px;background:#ffffff;border-left-color:#e2e2e2;">25-08-02</div>
<div class="c" style="left:162px;top:655px;width:111px;height:26px;background:#ffffff;"><i>奥格斯堡</i>(<i>中</i>)</div>
<div class="c" style="left:273px;top:655px;width:92px;height:26px;background:#ffffff;"><span class="sc">1-0</span>(0-0)</div>
<div class="c" style="left:365px;top:655px;width:40px;height:26px;background:#ffffff;">6-4</div>
<div class="c" style="left:405px;top:655px;width:95px;height:26px;background:#ffffff;"><span class="g"><i>水晶宫</i></span></div>
<div class="c" style="left:500px;top:655px;width:45px;height:26px;background:#fdf9f6;"></div>
<div class="c" style="left:545px;top:655px;width:97px;height:26px;background:#fdf9f6;"></div>
<div class="c" style="left:642px;top:655px;width:47px;height:26px;background:#fdf9f6;"></div>
<div class="c" style="left:689px;top:655px;width:62px;height:26px;background:#f1f7fb;"></div>
<div class="c" style="left:751px;top:655px;width:63px;height:26px;background:#f1f7fb;"></div>
<div class="c" style="left:814px;top:655px;width:79px;height:26px;background:#f1f7fb;"></div>
<div class="c" style="left:893px;top:655px;width:39px;height:26px;background:#ffffff;"><span style="color:#1818b0"><i>负</i></span></div>
<div class="c" style="left:932px;top:655px;width:39px;height:26px;background:#ffffff;"></div>
<div class="c" style="left:971px;top:655px;width:58px;height:26px;background:#ffffff;"></div>
<div class="c" style="left:3px;top:681px;width:81px;height:26px;background:#00a8a8;color:#fff;border-top-color:#e2e2e2;"><i>球会友谊</i></div>
<div class="c" style="left:84px;top:681px;width:78px;height:26px;background:#f0f0f0;border-left-color:#e2e2e2;">25-08-01</div>
<div class="c" style="left:162px;top:681px;width:111px;height:26px;background:#f0f0f0;"><i>奥格斯堡</i>(<i>中</i>)</div>
<div class="c" style="left:273px;top:681px;width:92px;height:26px;background:#f0f0f0;"><span class="sc">1-3</span>(0-1)</div>
<div class="c" style="left:365px;top:681px;width:40px;height:26px;background:#f0f0f0;">3-3</div>
<div class="c" style="left:405px;top:681px;width:95px;height:26px;background:#f0f0f0;"><span class="g"><i>水晶宫</i></span></div>
<div class="c" style="left:500px;top:681px;width:45px;height:26px;background:#fdf9f6;">0.92</div>
<div class="c" style="left:545px;top:681px;width:97px;height:26px;background:#fdf9f6;"><i>受半球</i></div>
<div class="c" style="left:642px;top:681px;width:47px;height:26px;background:#fdf9f6;">0.90</div>
<div class="c" style="left:689px;top:681px;width:62px;height:26px;background:#f1f7fb;">3.28</div>
<div class="c" style="left:751px;top:681px;width:63px;height:26px;background:#f1f7fb;">3.68</div>
<div class="c" style="left:814px;top:681px;width:79px;height:26px;background:#f1f7fb;">2.00</div>
<div class="c" style="left:893px;top:681px;width:39px;height:26px;background:#f0f0f0;"><span style="color:#d42020"><i>胜</i></span></div>
<div class="c" style="left:932px;top:681px;width:39px;height:26px;background:#f0f0f0;"><span style="color:#d42020"><i>赢</i></span></div>
<div class="c" style="left:971px;top:681px;width:58px;height:26px;background:#f0f0f0;"><span style="color:#d02020"><i>大</i></span></div>
<div class="c sum" style="left:3px;top:708px;width:1026px;height:25px;background:#fff;border-top:0;"><span><i>近</i><span class="r">10</span><i>场</i>,<i>胜</i>3<i>平</i>6<i>负</i>1, <i>胜率</i>:<span class="r">30%</span> <i>让胜率</i>:<span class="r">44.4%</span> <i>大率</i>:<span class="r">33.3%</span> <i>单率</i>:<span class="r">30%</span></span></div>
<div class="bar" style="left:84px;top:707px;width:945px;height:1px;background:#c4c4c4"></div>
<div class="bar" style="left:3px;top:733px;width:1026px;height:1px;background:#c4c4c4"></div>
</body></html>
